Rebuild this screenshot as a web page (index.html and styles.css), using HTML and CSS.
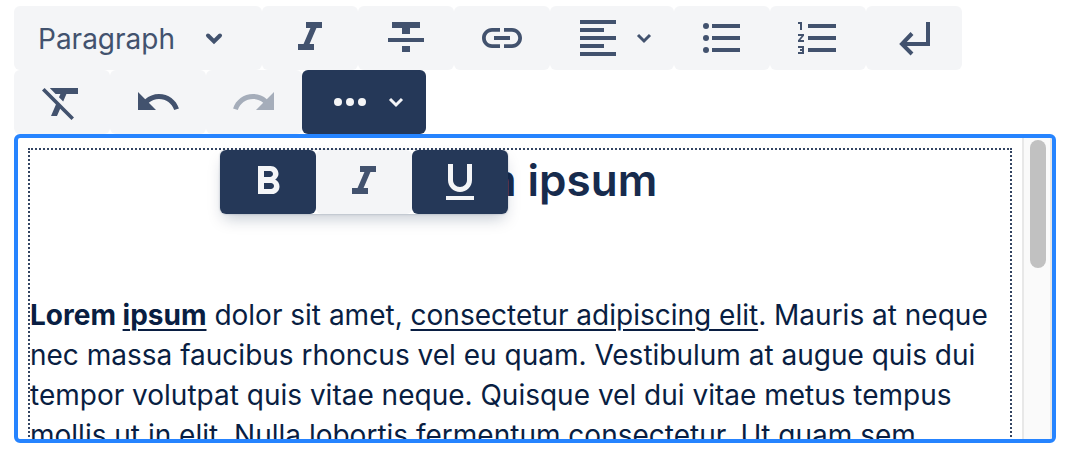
FILE: index.html
```html
<!DOCTYPE html>
<html lang="en">
<head>
<meta charset="utf-8">
<title>Text editor</title>
<link rel="stylesheet" href="styles.css">
</head>
<body>
<div class="toolbar" role="toolbar" aria-label="Formatting">
  <div class="format">
    <select class="format-select" aria-label="Text style"><option>Paragraph</option><option>Heading</option></select>
    <svg class="chevron format-chevron" viewBox="0 0 24 24"><path d="M6 9.500l6 6 6-6" stroke-width="4" stroke-linecap="round"/></svg>
  </div>
  <button class="tool" type="button" aria-label="Italic"><svg class="icon" viewBox="0 0 48 48"><path d="M20 8v6h4.430l-6.860 16H12v6h16v-6h-4.430l6.860-16H36V8z"/></svg></button>
  <button class="tool" type="button" aria-label="Strikethrough"><svg class="icon" viewBox="0 0 48 48"><path d="M20 38h8v-6h-8v6zM10 8v6h10v6h8v-6h10V8H10zM6 28h36v-4H6v4z"/></svg></button>
  <button class="tool" type="button" aria-label="Link"><svg class="icon" viewBox="0 0 48 48"><path d="M7.800 24c0-3.420 2.780-6.200 6.200-6.200h8V14h-8C8.480 14 4 18.480 4 24s4.480 10 10 10h8v-3.800h-8c-3.420 0-6.200-2.780-6.200-6.200zm8.200 2h16v-4H16v4zm18-12h-8v3.800h8c3.420 0 6.200 2.780 6.200 6.200s-2.780 6.200-6.200 6.200h-8V34h8c5.520 0 10-4.480 10-10s-4.480-10-10-10z"/></svg></button>
  <button class="tool tool-menu" type="button" aria-label="Alignment"><svg class="icon" viewBox="0 0 48 48"><path d="M30 30H6v4h24v-4zm0-16H6v4h24v-4zM6 26h36v-4H6v4zm0 16h36v-4H6v4zM6 6v4h36V6H6z"/></svg><svg class="chevron" viewBox="0 0 24 24"><path d="M6 9l6 6 6-6" stroke-width="3"/></svg></button>
  <button class="tool" type="button" aria-label="Bulleted list"><svg class="icon" viewBox="0 0 48 48"><circle cx="8" cy="12" r="3"/><circle cx="8" cy="24" r="3"/><circle cx="8" cy="36" r="3"/><path d="M14 10h28v4H14zM14 22h28v4H14zM14 34h28v4H14z"/></svg></button>
  <button class="tool" type="button" aria-label="Numbered list"><svg class="icon" viewBox="0 0 48 48"><path d="M4 34h4v1H6v2h2v1H4v2h6v-8H4v2zm2-18h2V8H4v2h2v6zm-2 6h3.600L4 26.200V28h6v-2H6.400l3.600-4.200V20H4v2zm10-12v4h28v-4H14zm0 28h28v-4H14v4zm0-12h28v-4H14v4z"/></svg></button>
  <button class="tool" type="button" aria-label="Line break"><svg class="icon icon-line" viewBox="0 0 48 48"><path d="M38 8v22H13M22 19.500L12 30l10 10"/></svg></button>
  <button class="tool" type="button" aria-label="Clear formatting"><svg class="icon" viewBox="0 0 48 48"><path d="M6.540 10L4 12.540l13.940 13.940L13 38h6l3.140-7.320L33.460 42 36 39.460 7.090 10.550 6.540 10zM12 10v.360L17.640 16h4.790l-1.440 3.350 4.200 4.200L28.430 16H40v-6H12z"/></svg></button>
  <button class="tool" type="button" aria-label="Undo"><svg class="icon" viewBox="0 0 48 48"><path d="M25 16c-5.290 0-10.110 1.970-13.800 5.200L4 14v18h18l-7.230-7.230C17.540 22.440 21.090 21 25 21c7.090 0 13.090 4.610 15.190 11l4.740-1.560C42.170 21.980 34.300 16 25 16z"/></svg></button>
  <button class="tool" type="button" aria-label="Redo" disabled><svg class="icon" viewBox="0 0 48 48"><path d="M36.790 21.200C33.110 17.970 28.290 16 23 16c-9.300 0-17.170 5.980-19.920 14.440L7.810 32c2.100-6.390 8.100-11 15.190-11 3.910 0 7.460 1.440 10.230 3.770L26 32h18V14l-7.210 7.200z"/></svg></button>
  <button class="tool tool-menu active" type="button" aria-label="More" aria-expanded="true"><svg class="icon" viewBox="0 0 48 48"><circle cx="12" cy="24" r="4"/><circle cx="24" cy="24" r="4"/><circle cx="36" cy="24" r="4"/></svg><svg class="chevron" viewBox="0 0 24 24"><path d="M6 9l6 6 6-6" stroke-width="3"/></svg></button>
  <div class="more" role="group" aria-label="More formatting">
    <button class="tool active" type="button" aria-label="Bold" aria-pressed="true"><svg class="icon" viewBox="0 0 48 48"><path d="M31.190 21.580C33.140 20.200 34.500 18 34.500 16c0-4.510-3.490-8-8-8H14v28h14.090c4.190 0 7.410-3.400 7.410-7.580 0-3.040-1.730-5.630-4.310-6.840zM20 13h6c1.660 0 3 1.340 3 3s-1.340 3-3 3h-6v-6zm7 18h-7v-6h7c1.660 0 3 1.340 3 3s-1.340 3-3 3z"/></svg></button>
    <button class="tool" type="button" aria-label="Italic"><svg class="icon" viewBox="0 0 48 48"><path d="M20 8v6h4.430l-6.860 16H12v6h16v-6h-4.430l6.860-16H36V8z"/></svg></button>
    <button class="tool active" type="button" aria-label="Underline" aria-pressed="true"><svg class="icon" viewBox="0 0 48 48"><path d="M24 34c6.630 0 12-5.370 12-12V6h-5v16c0 3.870-3.130 7-7 7s-7-3.130-7-7V6h-5v16c0 6.630 5.370 12 12 12zM10 38v4h28v-4H10z"/></svg></button>
  </div>
</div>
<main class="editor">
  <div class="viewport">
    <div class="document" contenteditable="true" spellcheck="false">
      <h1 class="title">Lorem ipsum</h1>
      <p class="text"><strong>Lorem <u>ipsum</u></strong> dolor sit amet, <u>consectetur adipiscing elit</u>. Mauris at neque nec massa faucibus rhoncus vel eu quam. Vestibulum at augue quis dui tempor volutpat quis vitae neque. Quisque vel dui vitae metus tempus mollis ut in elit. Nulla lobortis fermentum consectetur. Ut quam sem</p>
    </div>
  </div>
  <div class="scrollbar"><div class="thumb"></div></div>
</main>
</body>
</html>
```
FILE: styles.css
```css
* { box-sizing: border-box; }
body {
  display: flex;
  flex-direction: column;
  height: 100vh;
  margin: 0;
  padding: 6px 26px 17px 14px;
  background: #fff;
  color: #091e42;
  font-family: Inter, "Liberation Sans", sans-serif;
}
.toolbar { position: relative; display: flex; flex-wrap: wrap; }
.tool {
  display: flex;
  align-items: center;
  height: 64px;
  padding: 0 24px;
  border: 0;
  border-radius: 6px;
  background: #f4f5f7;
  color: #42526e;
}
.tool-menu { gap: 10px; padding-right: 18px; }
.tool.active { background: #253858; color: #f4f5f7; }
.tool:disabled { color: #a5adba; }
.icon { width: 48px; height: 48px; fill: currentColor; }
.icon-line { fill: none; stroke: currentColor; stroke-width: 4; }
.chevron { width: 24px; height: 24px; fill: none; stroke: currentColor; }
.format { display: grid; align-items: center; width: 248px; color: #42526e; }
.format-select {
  grid-area: 1 / 1;
  appearance: none;
  width: 100%;
  height: 64px;
  padding: 2px 24px 0;
  border: 0;
  border-radius: 6px;
  background: #f4f5f7;
  color: inherit;
  font: 28px Inter, "Liberation Sans", sans-serif;
}
.format-chevron { grid-area: 1 / 1; justify-self: end; margin-right: 36px; pointer-events: none; }
.more {
  position: absolute;
  top: 144px;
  left: 206px;
  z-index: 1;
  display: flex;
  border-radius: 6px;
  background: #fff;
  box-shadow: 0 8px 16px -4px rgba(9, 30, 66, .25), 0 0 2px rgba(9, 30, 66, .31);
}
.editor {
  display: flex;
  flex: 1;
  min-height: 0;
  overflow: hidden;
  border: 4px solid #2684ff;
  border-radius: 6px;
}
.viewport { flex: 1; min-width: 0; padding: 10px 10px 0; }
.document { border: 2px dotted #344563; outline: 0; }
.title {
  margin: 0;
  color: #172b4d;
  font-size: 44px;
  font-weight: 600;
  line-height: 60px;
  text-align: center;
}
.text { margin: 85px 0 0; font-size: 28px; line-height: 40px; }
u { text-decoration-thickness: 2px; text-underline-offset: 4px; }
.scrollbar {
  width: 30px;
  padding: 2px 4px 2px 6px;
  border: solid #e8e8e8;
  border-width: 0 2px;
  background: #fafafa;
}
.thumb { width: 16px; height: 128px; border-radius: 8px; background: #c1c1c1; }
```
